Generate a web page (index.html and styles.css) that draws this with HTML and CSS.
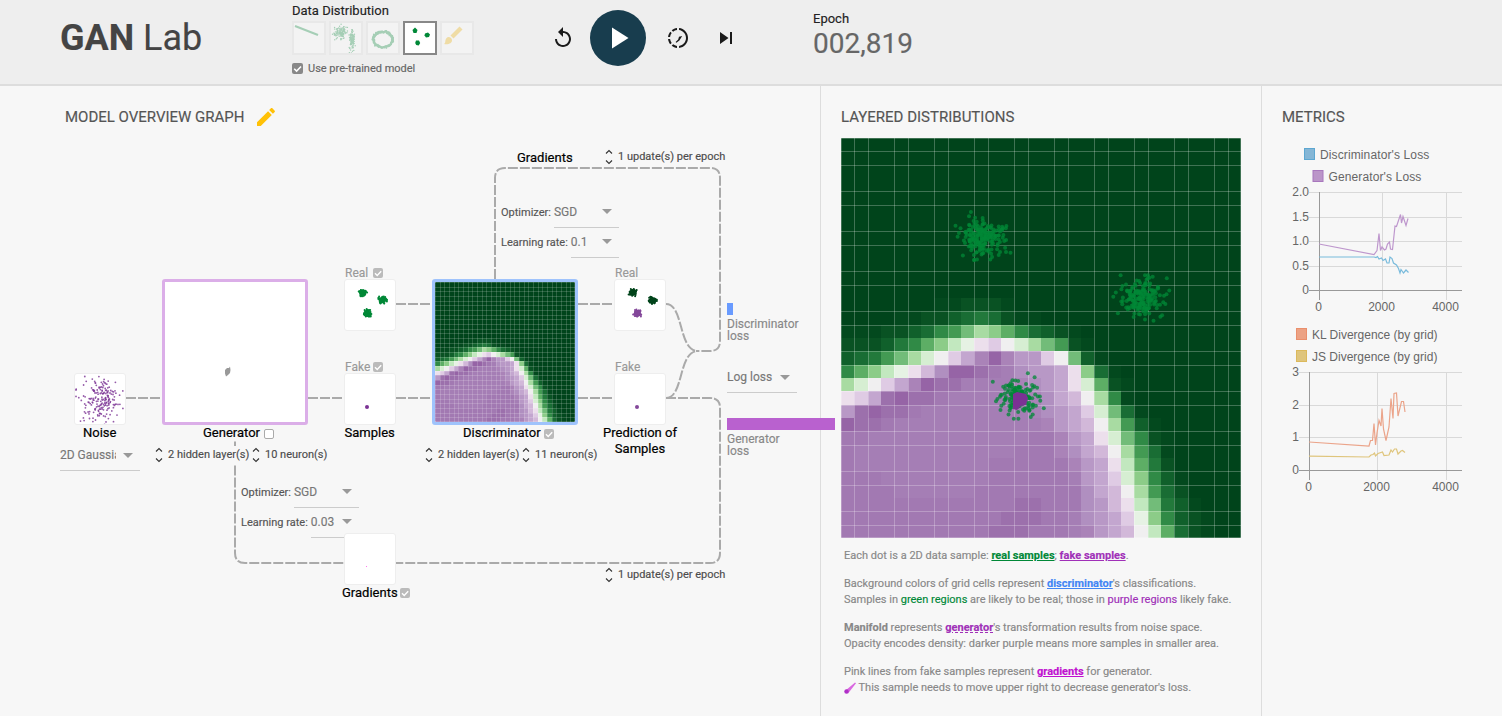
FILE: index.html
```html
<!DOCTYPE html>
<html lang="en">
<head>
<meta charset="utf-8">
<title>GAN Lab</title>
<link rel="stylesheet" href="styles.css">
</head>
<body>
<header class="topbar">
  <h1 class="brand"><b>GAN</b> Lab</h1>
  <div class="data-picker">
    <div class="label">Data Distribution</div>
    <div class="thumbs">
      <div class="thumb"><svg width="30" height="30"><path d="M1 3L24 12" stroke="#008837" stroke-width="2"/></svg></div>
      <div class="thumb"><svg width="30" height="30" id="thumb-gauss"></svg></div>
      <div class="thumb"><svg width="30" height="30" id="thumb-ring"></svg></div>
      <div class="thumb selected"><svg width="30" height="30" fill="#008837"><path d="M10 4.500l2.500 2.500-1 3-3 0-1-3z"/><path d="M20 10.500l3-1 2 2-1 2.500-3 .5-1.500-2z"/><path d="M11 17.500l3 0 1.200 2.500-1.500 2.500-2.500-.5-1-2z"/></svg></div>
      <div class="thumb"><svg width="30" height="30" fill="#f4b400"><path d="M17.500 3.500l3 3-9 9-3-3z"/><path d="M6.500 14c2 0 3.500 1.500 3.500 3.500 0 2.500-3.500 4.500-8 3.500 1.500-1 1.200-2.500 1.500-4 .4-1.500 1.500-3 3-3z"/></svg></div>
    </div>
    <div class="pretrained"><i class="check dark"><svg viewBox="0 0 10 10"><path d="M2 5.200L4.200 7.400 8.200 3.200"/></svg></i><span>Use pre-trained model</span></div>
  </div>
  <div class="controls">
    <svg class="ic" viewBox="0 0 24 24"><path d="M12 5V1L7 6l5 5V7c3.310 0 6 2.690 6 6s-2.690 6-6 6-6-2.690-6-6H4c0 4.420 3.580 8 8 8s8-3.580 8-8-3.580-8-8-8z"/></svg>
    <div class="play"><svg viewBox="0 0 24 24"><path d="M8 5v14l11-7z"/></svg></div>
    <svg class="ic" viewBox="0 0 24 24"><path d="M16.200 10L13 10.800 12.200 13.600 9.600 16 10.400 16.800 13.400 14.400zM11 4.070V2.050c-2.010.2-3.840 1-5.320 2.210L7.100 5.690c1.110-.86 2.440-1.440 3.900-1.620zM5.690 7.100L4.260 5.680C3.050 7.160 2.250 8.990 2.050 11h2.020c.18-1.460.76-2.790 1.620-3.900zM4.070 13H2.050c.2 2.010 1 3.840 2.210 5.320l1.430-1.430c-.86-1.100-1.440-2.430-1.620-3.890zm1.610 6.740C7.160 20.950 9 21.750 11 21.950v-2.020c-1.460-.18-2.790-.76-3.900-1.620l-1.420 1.430zM22 12c0 5.160-3.920 9.420-8.950 9.950v-2.020C16.970 19.410 20 16.050 20 12s-3.030-7.410-6.950-7.930V2.050C18.080 2.580 22 6.840 22 12z"/></svg>
    <svg class="ic" viewBox="0 0 24 24"><path d="M6 18l8.500-6L6 6v12zM16 6v12h2V6h-2z"/></svg>
  </div>
  <div class="epoch">
    <div class="label">Epoch</div>
    <div class="epoch-num">002,819</div>
  </div>
</header>

<main class="columns">
  <section class="model">
    <h2>MODEL OVERVIEW GRAPH <svg class="pencil" viewBox="0 0 24 24"><path d="M3 17.250V21h3.750L17.810 9.940l-3.750-3.750L3 17.250zM20.710 7.040c.39-.39.39-1.020 0-1.410l-2.340-2.340c-.39-.39-1.020-.39-1.410 0l-1.830 1.830 3.750 3.750 1.830-1.830z"/></svg></h2>
    <div class="graph">
      <svg class="wires" width="820" height="630" viewBox="0 86 820 630">
        <path d="M126 398H162M308 398H344M396 304H432M396 398H432M578 304H614M578 398H614"/>
        <path d="M495 279V178Q495 168 505 168H710Q720 168 720 178V341Q720 351 710 351H696"/>
        <path d="M666 304C684 304 678 351 698 351"/>
        <path d="M666 398C684 398 678 351 698 351"/>
        <path d="M666 398H710Q720 398 720 408V553Q720 563 710 563H245Q235 563 235 553V441"/>
      </svg>

      <div class="node small at-noise"><svg width="50" height="50" id="noise"></svg></div>
      <div class="node big gen"><svg width="140" height="140"><path d="M60 88l2-2 2 0 1-1.500 .5 3.500-.5 3-2 2-2 1.500-1-3z" fill="#999"/></svg></div>
      <div class="node small at-real"><svg width="50" height="50" id="real-samples"></svg></div>
      <div class="node small at-fake"><svg width="50" height="50"><circle cx="22" cy="33" r="2" fill="#7b3294"/></svg></div>
      <div class="node big disc"><svg width="140" height="140" id="heat-small"></svg></div>
      <div class="node small at-preal"><svg width="50" height="50" id="pred-samples"></svg></div>
      <div class="node small at-pfake"><svg width="50" height="50"><circle cx="22" cy="33" r="2" fill="#84489a"/></svg></div>

      <div class="tag t-real">Real <i class="check"><svg viewBox="0 0 10 10"><path d="M2 5.200L4.200 7.400 8.200 3.200"/></svg></i></div>
      <div class="tag t-fake">Fake <i class="check"><svg viewBox="0 0 10 10"><path d="M2 5.200L4.200 7.400 8.200 3.200"/></svg></i></div>
      <div class="tag t-preal">Real</div>
      <div class="tag t-pfake">Fake</div>

      <div class="name n-noise">Noise</div>
      <div class="name n-gen">Generator <i class="check empty"></i></div>
      <div class="name n-samples">Samples</div>
      <div class="name n-disc">Discriminator <i class="check"><svg viewBox="0 0 10 10"><path d="M2 5.200L4.200 7.400 8.200 3.200"/></svg></i></div>
      <div class="name n-pred">Prediction of<br>Samples</div>
      <div class="name n-dgrad">Gradients</div>
      <div class="name n-ggrad">Gradients <i class="check"><svg viewBox="0 0 10 10"><path d="M2 5.200L4.200 7.400 8.200 3.200"/></svg></i></div>

      <div class="select s-noise"><span class="clip">2D Gaussian</span><b class="caret"></b></div>
      <div class="spin p-gl"><svg viewBox="0 0 8 18"><path d="M1 5.500L4 2.500 7 5.500M1 12.500L4 15.500 7 12.500"/></svg>2 hidden layer(s)</div>
      <div class="spin p-gn"><svg viewBox="0 0 8 18"><path d="M1 5.500L4 2.500 7 5.500M1 12.500L4 15.500 7 12.500"/></svg>10 neuron(s)</div>
      <div class="spin p-dl"><svg viewBox="0 0 8 18"><path d="M1 5.500L4 2.500 7 5.500M1 12.500L4 15.500 7 12.500"/></svg>2 hidden layer(s)</div>
      <div class="spin p-dn"><svg viewBox="0 0 8 18"><path d="M1 5.500L4 2.500 7 5.500M1 12.500L4 15.500 7 12.500"/></svg>11 neuron(s)</div>
      <div class="spin p-du"><svg viewBox="0 0 8 18"><path d="M1 5.500L4 2.500 7 5.500M1 12.500L4 15.500 7 12.500"/></svg>1 update(s) per epoch</div>
      <div class="spin p-gu"><svg viewBox="0 0 8 18"><path d="M1 5.500L4 2.500 7 5.500M1 12.500L4 15.500 7 12.500"/></svg>1 update(s) per epoch</div>

      <div class="params d-params">
        <div class="param"><span>Optimizer:</span><div class="select"><span>SGD</span><b class="caret"></b></div></div>
        <div class="param"><span>Learning rate:</span><div class="select"><span>0.1</span><b class="caret"></b></div></div>
      </div>
      <div class="params g-params">
        <div class="param"><span>Optimizer:</span><div class="select"><span>SGD</span><b class="caret"></b></div></div>
        <div class="param"><span>Learning rate:</span><div class="select"><span>0.03</span><b class="caret"></b></div></div>
      </div>
      <div class="node small at-grad"><svg width="50" height="50"><rect x="21" y="32" width="1" height="1" fill="#f7e"/></svg></div>

      <div class="losses">
        <div class="bar blue"></div>
        <div class="loss-name">Discriminator<br>loss</div>
        <div class="select s-loss"><span>Log loss</span><b class="caret"></b></div>
        <div class="bar purple"></div>
        <div class="loss-name">Generator<br>loss</div>
      </div>
    </div>
  </section>

  <section class="layers">
    <h2>LAYERED DISTRIBUTIONS</h2>
    <svg class="heat" width="400" height="400" id="heat"></svg>
    <div class="notes">
      <p>Each dot is a 2D data sample: <b class="u green">real samples</b>; <b class="u purple">fake samples</b>.</p>
      <p>Background colors of grid cells represent <b class="u blue">discriminator</b>'s classifications.<br>Samples in <span class="green">green regions</span> are likely to be real; those in <span class="purple">purple regions</span> likely fake.</p>
      <p><b>Manifold</b> represents <b class="dash purple">generator</b>'s transformation results from noise space.<br>Opacity encodes density: darker purple means more samples in smaller area.</p>
      <p>Pink lines from fake samples represent <b class="u pink">gradients</b> for generator.<br><svg class="tick" width="13" height="12" viewBox="0 0 13 12"><path d="M1.500 8.500L11 .5 12 1.200 4 11.500z" fill="#d968e0"/><circle cx="2.500" cy="9.500" r="2.200" fill="#b030c8"/></svg> This sample needs to move upper right to decrease generator's loss.</p>
    </div>
  </section>

  <section class="metrics">
    <h2>METRICS</h2>
    <svg class="chart" width="200" height="360" viewBox="1282 145 200 360">
      <g stroke-width="1">
        <rect x="1304.500" y="148.500" width="10" height="11" fill="#84b6d6" stroke="#5da7d1"/>
        <rect x="1313" y="170.500" width="10" height="11" fill="#bb95c9" stroke="#a877bd"/>
        <rect x="1296.500" y="328.500" width="10" height="11" fill="#eca284" stroke="#ea8f6c"/>
        <rect x="1296.500" y="350.500" width="10" height="11" fill="#dfc57c" stroke="#dcb95c"/>
      </g>
      <g class="lines">
        <path d="M1309 192.500H1462M1309 217.500H1462M1309 241.500H1462M1309 266.500H1462M1382.500 192V300M1446.500 192V300"/>
        <path class="axis" d="M1309 290.500H1462M1319.500 192V300"/>
        <path d="M1299 372.500H1462M1299 405.500H1462M1299 437.500H1462M1377.500 372V480M1446.500 372V480"/>
        <path class="axis" d="M1299 470.500H1462M1309.500 372V480"/>
      </g>
      <g fill="none" stroke-width="1.200">
        <path stroke="#be97cd" d="M1319 244L1374 254.700 1377 250.500 1379 233.500 1380.500 250.500 1382 247 1384.500 250 1386 249 1387.500 244 1389.500 242 1390.500 249 1392.500 249.500 1395 226 1396.500 226.500 1400.500 214.500 1401.500 223 1403 216.500 1406 225.500 1408 218.500"/>
        <path stroke="#79bbdc" d="M1319 257H1374L1376 257.500 1377.500 256.500 1379 259 1381.500 258 1383 260.500 1385.500 259 1387 263 1389 263 1390 257 1392 258.500 1393.500 263 1396.500 265 1398.500 268.500 1400 273 1401 269.500 1403.500 273 1406 270 1408.500 272.500"/>
        <path stroke="#eba48a" d="M1309 442L1369 446 1370.500 440.500 1372.500 440.500 1374 423.500 1375.500 445 1377 433 1379 420.500 1381 426 1382 408.500 1383.500 429 1386 440.500 1389 427 1391 398.500 1393 418.500 1394 393.500 1396.500 393 1398 416 1401.500 401.500 1403.500 401.500 1405 412"/>
        <path stroke="#dfc57c" d="M1309 456.200L1369 457 1371 455 1373 454.500 1374.500 453 1375.500 456 1378 453.500 1382.500 452 1384 455.500 1389 455 1391 450 1392.500 452 1394.500 449 1396.500 449 1398 454 1401 451 1402.500 450.500 1405 452.500"/>
      </g>
      <g class="ctext">
        <g letter-spacing="0.12"><text x="1320" y="159">Discriminator's Loss</text><text x="1328.500" y="181">Generator's Loss</text></g>
        <text x="1312" y="339">KL Divergence (by grid)</text><text x="1312" y="361">JS Divergence (by grid)</text>
        <g text-anchor="end"><text x="1309" y="196">2.0</text><text x="1309" y="221">1.5</text><text x="1309" y="245">1.0</text><text x="1309" y="270">0.5</text><text x="1309" y="294">0</text>
        <text x="1299" y="376">3</text><text x="1299" y="409">2</text><text x="1299" y="441">1</text><text x="1299" y="474">0</text></g>
        <g text-anchor="middle"><text x="1318.500" y="311">0</text><text x="1381.500" y="311">2000</text><text x="1445.500" y="311">4000</text>
        <text x="1308.500" y="491">0</text><text x="1376.500" y="491">2000</text><text x="1445.500" y="491">4000</text></g>
      </g>
    </svg>
  </section>
</main>
<script src="main.js"></script>
</body>
</html>
```

FILE: styles.css
```css
* { box-sizing: border-box; }
body { margin: 0; height: 716px; overflow: hidden; background: #f7f7f7; font-family: Roboto, "Liberation Sans", sans-serif; color: #111; -webkit-text-stroke-width: 0.15px; }
svg { display: block; -webkit-text-stroke-width: 0; }
h1, h2, p { margin: 0; font-weight: 400; }

.topbar { display: flex; height: 86px; background: #eee; border-bottom: 2px solid #ddd; padding-left: 60px; }
.brand { width: 232px; padding-top: 15px; font-size: 36px; line-height: 46px; color: #444; white-space: nowrap; }
.label { font-size: 13px; line-height: 16px; color: #222; }
.data-picker { width: 259px; padding-top: 3px; }
.thumbs { display: flex; gap: 3px; margin-top: 2px; }
.thumb { width: 34px; height: 34px; border: 2px solid #ddd; background: #fff; opacity: 0.3; }
.thumb.selected { opacity: 1; border-color: #888; }
.pretrained { display: flex; align-items: center; gap: 5px; margin-top: 6px; font-size: 11px; line-height: 15px; color: #666; }
.check { display: block; width: 10px; height: 10px; border-radius: 2px; background: #bbb; flex: none; }
.check path { fill: none; stroke: #fff; stroke-width: 1.4; }
.check.dark { width: 11px; height: 11px; background: #888; }
.check.empty { background: #fff; border: 1.5px solid #aaa; }
.controls { display: flex; align-items: center; height: 76px; width: 261px; }
.ic { width: 24px; height: 24px; fill: #1a1a1a; }
.play { width: 56px; height: 56px; border-radius: 50%; background: #183d4e; margin: 0 20px 0 15px; padding: 10px; }
.play svg { width: 36px; height: 36px; fill: #fff; }
.play + .ic { margin-right: 24px; }
.epoch { padding: 11px 0 0 1px; }
.epoch-num { font-size: 28px; line-height: 34px; color: #666; }

.columns { display: flex; height: 630px; }
h2 { font-size: 15px; line-height: 18px; color: #555; white-space: nowrap; }
.model { width: 820px; position: relative; }
.model h2 { display: flex; align-items: center; gap: 9px; padding: 20px 0 0 65px; height: 42px; }
.pencil { width: 24px; height: 24px; fill: #ffc107; }
.layers { width: 442px; border: solid #ddd; border-width: 0 1px; padding: 22px 0 0 20px; }
.metrics { flex: 1; padding: 22px 0 0 20px; }
.heat { margin-top: 12px; }
.notes { padding: 10px 0 0 3px; font-size: 11px; line-height: 16px; color: #888; white-space: nowrap; }
.notes p + p { margin-top: 12px; }
.green { color: #008837; }
.purple { color: #a030b8; }
.blue { color: #4285f4; }
.pink { color: #c010d0; }
.u { text-decoration: underline; }
.dash { text-decoration: underline dashed; text-decoration-thickness: 1px; }
.tick { display: inline-block; vertical-align: -3px; margin-right: -1px; }
.chart { margin-top: 19px; }
.lines path { stroke: #d9d9d9; }
.lines .axis { stroke: #999; }
.ctext { font: 12px "Liberation Sans", sans-serif; fill: #666; }

/* free canvas of the model diagram */
.graph { position: absolute; left: 0; top: 0; width: 820px; height: 630px; }
.graph > * { position: absolute; white-space: nowrap; }
.wires { left: 0; top: 0; }
.wires path { fill: none; stroke: #aaa; stroke-width: 2; stroke-dasharray: 10 2; }
.node { background: #fff; border-radius: 3px; }
.node svg { border-radius: 1px; }
.small { width: 52px; height: 52px; border: 1px solid #eee; }
.big { width: 146px; height: 146px; border: 3px solid #dbaee8; }
.disc { left: 432px; top: 193px; border-color: #9fc3fc; }
.gen { left: 162px; top: 193px; }
.at-noise { left: 74px; top: 287px; }
.at-real { left: 344px; top: 193px; }
.at-fake { left: 344px; top: 287px; }
.at-preal { left: 614px; top: 193px; }
.at-pfake { left: 614px; top: 287px; }
.at-grad { left: 344px; top: 447px; }
.tag { display: flex; gap: 5px; align-items: center; font-size: 12px; line-height: 14px; color: #999; }
.t-real { left: 345px; top: 180px; }
.t-fake { left: 345px; top: 274px; gap: 3px; }
.t-preal { left: 615px; top: 180px; }
.t-pfake { left: 615px; top: 274px; }
.name { display: flex; gap: 4px; align-items: center; font-size: 13px; line-height: 16px; color: #000; -webkit-text-stroke: 0.2px #000; }
.name .check { margin-top: 2px; }
.n-noise { left: 83px; top: 339px; }
.n-gen { left: 203px; top: 339px; }
.n-samples { left: 344.5px; top: 339px; }
.n-disc { left: 463px; top: 339px; gap: 3px; }
.n-pred { left: 600px; width: 80px; top: 339px; display: block; text-align: center; }
.n-dgrad { left: 517px; top: 64px; }
.n-ggrad { left: 342px; top: 499px; gap: 2px; }
.n-ggrad .check { margin-top: 0; }
.select { display: flex; align-items: center; justify-content: space-between; height: 31px; padding-right: 7px; border-bottom: 1px solid #ccc; font-size: 12px; color: #777; }
.caret { border: 5px solid transparent; border-top-color: #999; border-bottom: 0; }
.clip { overflow: hidden; width: 56px; }
.s-noise { left: 60px; top: 354px; width: 80px; }
.spin { display: flex; align-items: center; gap: 5px; font-size: 11px; line-height: 18px; color: #4c4c4c; background: #f7f7f7; }
.spin svg { width: 8px; height: 18px; }
.spin path { fill: none; stroke: #333; stroke-width: 1.1; }
.p-gl { left: 155px; top: 360px; }
.p-gn { left: 252px; top: 360px; }
.p-dl { left: 425px; top: 360px; }
.p-dn { left: 522px; top: 360px; }
.p-du { left: 605px; top: 62px; }
.p-gu { left: 605px; top: 480px; }
.params { width: 118px; font-size: 11px; color: #555; }
.param { display: flex; align-items: center; gap: 3px; height: 30px; }
.param > span { padding-bottom: 2px; }
.param .select { flex: 1; height: 30px; padding-bottom: 2px; }
.d-params { left: 501px; top: 112px; }
.g-params { left: 241px; top: 392px; }
.losses { left: 727px; top: 217px; display: flex; flex-direction: column; font-size: 12px; line-height: 12px; color: #888; }
.bar { height: 12px; }
.bar.blue { width: 6px; background: #699bff; }
.bar.purple { width: 108px; background: #b961cf; margin-top: 25px; }
.loss-name { margin-top: 3px; }
.s-loss { width: 70px; margin-top: 20px; }
```

FILE: main.js
```js
var NS = 'http://www.w3.org/2000/svg';
var SCALE = {
  A: '#00441b', B: '#03491e', C: '#095223', D: '#10602b', E: '#196d34', F: '#22793b', G: '#308a46',
  H: '#439a53', I: '#5dae65', J: '#72bc79', K: '#8ccc88', L: '#a8dba2', M: '#c2e8bf', N: '#d6eed2',
  O: '#e6f2e4', P: '#f0eff0', Q: '#ecdfec', R: '#dfcbe4', S: '#d2b8d9', T: '#c3a6cf', U: '#b898c6',
  V: '#b08fc0', W: '#aa83b8', X: '#a57eb5', Y: '#a279b2', Z: '#9c70ac', a: '#9664a6'
};
// Classifier output per grid cell; short rows are fully "real" to the right.
var GRID = [
  '', '', '', '', '', '', '', '', '', '', '',
  '',
  'AAAAAAABBCCCB',
  'AAAABBCCDEFECBB',
  'BBBCCDEGHJLKIGEDCB',
  'CCCDFGIKMOQRPNLJHCB',
  'DEFHJLNPRTWaWUURPJDB',
  'GIKMOQSVaaZYXVUUTQKEB',
  'LNPRTWaZZXXXXWVUTQNICB',
  'QRTZaZZYXXXXXXWVTSPLGB',
  'UZaZZYXXXXXXXXWVUTRNJEB',
  'aZZYXXXXXXXXXXXWUTSPLHDB',
  'YYXXXXXXXXXXXXYYWUTQNJGCB',
  'YXXXXXXXXXXXXYYYWVTSPLHEB',
  'YXXXXXXXXXXYYYYYYWUTQMIFC',
  'YYYXXXXXXXXYYYYYYXUTRNKGDB',
  'YYYYXXXXXXYYYYYYYYVTSPLHEC',
  'YYYYYYYYYYYYYZZYYYVUSQMJFDB',
  'YYYYYYYYYYYYZZZYYXVUTROKGDCB',
  'YYYYYYYYYYYZZZYYYXWUTSPMIECB'
];

function add(svg, tag, attrs) {
  var el = document.createElementNS(NS, tag);
  for (var k in attrs) el.setAttribute(k, attrs[k]);
  svg.appendChild(el);
}
function heat(svg, size, skipThird, lineOpacity) {
  var s = size / 30, d = '';
  for (var r = 0; r < 30; r++) for (var c = 0; c < 30; c++) {
    var x = Math.round(c * s), y = Math.round(r * s);
    add(svg, 'rect', { x: x, y: y, width: Math.round((c + 1) * s) - x, height: Math.round((r + 1) * s) - y,
      fill: SCALE[GRID[r][c] || 'A'] });
  }
  for (var i = 0; i <= 30; i++) {
    if (skipThird && i % 3 === 0 && i !== 0 && i !== 30) continue;
    var p = Math.min(Math.round(i * s), size - 1) + 0.5;
    d += 'M' + p + ' 0V' + size + 'M0 ' + p + 'H' + size;
  }
  add(svg, 'path', { d: d, stroke: '#fff', 'stroke-opacity': lineOpacity, fill: 'none' });
}
var seed = 17;
function rnd() { seed = (seed * 16807) % 2147483647; return seed / 2147483647; }
function gauss() { return Math.sqrt(-2 * Math.log(rnd() + 1e-9)) * Math.cos(6.2832 * rnd()); }
function cloud(svg, n, cx, cy, sx, sy, r, color, op) {
  for (var i = 0; i < n; i++) {
    var gx = Math.max(-2.5, Math.min(2.5, gauss())), gy = Math.max(-2.4, Math.min(2.4, gauss()));
    add(svg, 'circle', { cx: (cx + gx * sx).toFixed(1), cy: (cy + gy * sy).toFixed(1), r: r, fill: color, opacity: op });
  }
}
var $ = function (id) { return document.getElementById(id); };

heat($('heat'), 400, true, 0.25);
heat($('heat-small'), 140, false, 0.17);
cloud($('heat'), 200, 142, 98, 11, 10, 2, '#008837', 0.75);
cloud($('heat'), 180, 301, 160, 11.5, 9.5, 2, '#008837', 0.75);
cloud($('heat'), 160, 178, 258, 10.5, 9.5, 2, '#008837', 0.75);
add($('heat'), 'path', { d: 'M172 256l4-2 9 2 2 4-2 7-5 1-4 4-4-1z', fill: '#7b3294' });

cloud($('noise'), 190, 26, 25, 10, 12, 0.9, '#7b3294', 0.8);
[['real-samples', ['#008837', '#008837', '#008837']], ['pred-samples', ['#00441b', '#00441b', '#84489a']]].forEach(function (s) {
  cloud($(s[0]), 100, 17.8, 12.4, 1.7, 1.6, 1, s[1][0], 1);
  cloud($(s[0]), 100, 37.6, 20, 1.7, 1.6, 1, s[1][1], 1);
  cloud($(s[0]), 100, 22.4, 32.8, 1.7, 1.6, 1, s[1][2], 1);
});
cloud($('thumb-gauss'), 130, 9.5, 9, 3.4, 3.2, 0.7, '#008837', 1);
cloud($('thumb-gauss'), 110, 21, 17, 1.3, 5.4, 0.7, '#008837', 1);
for (var i = 0; i < 190; i++) {
  var a = i / 190 * 6.2832, q = 1 + gauss() * 0.06;
  add($('thumb-ring'), 'circle', { cx: 15 + Math.cos(a) * 9.5 * q, cy: 16.5 + Math.sin(a) * 7.8 * q, r: 0.9, fill: '#008837' });
}
```
